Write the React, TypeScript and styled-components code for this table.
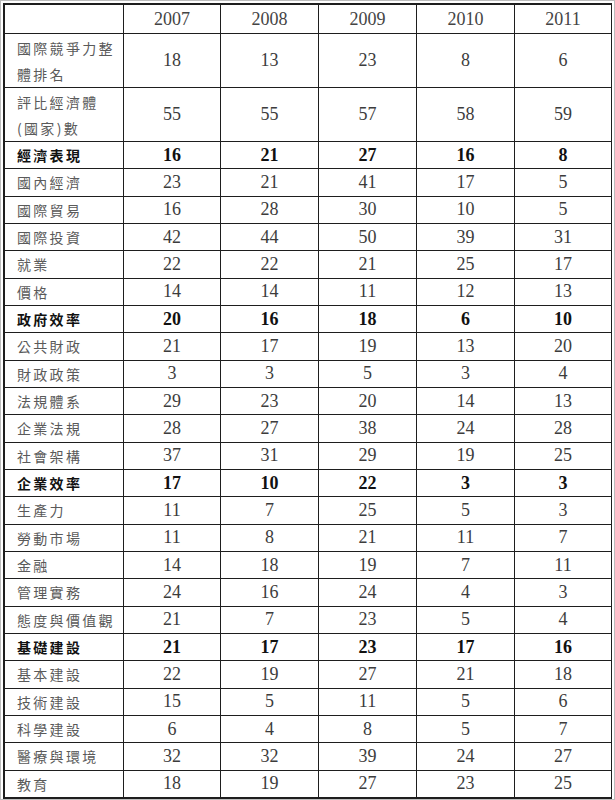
import React from 'react';
import styled, { createGlobalStyle } from 'styled-components';

const GlobalStyle = createGlobalStyle`
  html, body {
    margin: 0;
    padding: 0;
    background: #ffffff;
  }
`;

const Frame = styled.div`
  width: 615px;
  height: 800px;
  box-sizing: border-box;
  border: 1px solid #bdbdbd;
  padding: 2px;
  background: #ffffff;
`;

const TableBox = styled.div`
  width: 609px;
  box-sizing: border-box;
  border: 1px solid #1e1e1e;
`;

const Table = styled.table`
  width: 607px;
  border-collapse: collapse;
  table-layout: fixed;

  col:first-child {
    width: 119px;
  }
  col:nth-child(2),
  col:last-child {
    width: 97px;
  }
  col:nth-child(3),
  col:nth-child(4),
  col:nth-child(5) {
    width: 98px;
  }
`;

const HeadCell = styled.th`
  height: 28px;
  padding: 0;
  border: 1px solid #1e1e1e;
  font-family: "Liberation Serif", "Times New Roman", serif;
  font-size: 18px;
  font-weight: 400;
  color: #444444;
  text-align: center;
  vertical-align: middle;
`;

const LabelCell = styled.td<{ $bold?: boolean; $tall?: boolean }>`
  height: ${({ $tall }) => ($tall ? '53px' : '26.33px')};
  padding: 0 2px 0 12px;
  border: 1px solid #1e1e1e;
  font-family: "Noto Sans CJK TC", "Noto Sans", sans-serif;
  font-size: 14px;
  line-height: 26px;
  letter-spacing: 2.3px;
  white-space: pre-line;
  font-weight: ${({ $bold }) => ($bold ? 700 : 400)};
  color: ${({ $bold }) => ($bold ? '#111111' : '#5a5a5a')};
  text-align: left;
  vertical-align: middle;
`;

const NumCell = styled.td<{ $bold?: boolean }>`
  padding: 0;
  border: 1px solid #1e1e1e;
  font-family: "Liberation Serif", "Times New Roman", serif;
  font-size: 18px;
  font-weight: ${({ $bold }) => ($bold ? 700 : 400)};
  color: ${({ $bold }) => ($bold ? '#111111' : '#3c3c3c')};
  text-align: center;
  vertical-align: middle;
`;

type Row = {
  label: string;
  values: number[];
  bold?: boolean;
  tall?: boolean;
};

const years = [2007, 2008, 2009, 2010, 2011];

const rows: Row[] = [
  { label: '國際競爭力整\n體排名', values: [18, 13, 23, 8, 6], tall: true },
  { label: '評比經濟體\n(國家)數', values: [55, 55, 57, 58, 59], tall: true },
  { label: '經濟表現', values: [16, 21, 27, 16, 8], bold: true },
  { label: '國內經濟', values: [23, 21, 41, 17, 5] },
  { label: '國際貿易', values: [16, 28, 30, 10, 5] },
  { label: '國際投資', values: [42, 44, 50, 39, 31] },
  { label: '就業', values: [22, 22, 21, 25, 17] },
  { label: '價格', values: [14, 14, 11, 12, 13] },
  { label: '政府效率', values: [20, 16, 18, 6, 10], bold: true },
  { label: '公共財政', values: [21, 17, 19, 13, 20] },
  { label: '財政政策', values: [3, 3, 5, 3, 4] },
  { label: '法規體系', values: [29, 23, 20, 14, 13] },
  { label: '企業法規', values: [28, 27, 38, 24, 28] },
  { label: '社會架構', values: [37, 31, 29, 19, 25] },
  { label: '企業效率', values: [17, 10, 22, 3, 3], bold: true },
  { label: '生產力', values: [11, 7, 25, 5, 3] },
  { label: '勞動市場', values: [11, 8, 21, 11, 7] },
  { label: '金融', values: [14, 18, 19, 7, 11] },
  { label: '管理實務', values: [24, 16, 24, 4, 3] },
  { label: '態度與價值觀', values: [21, 7, 23, 5, 4] },
  { label: '基礎建設', values: [21, 17, 23, 17, 16], bold: true },
  { label: '基本建設', values: [22, 19, 27, 21, 18] },
  { label: '技術建設', values: [15, 5, 11, 5, 6] },
  { label: '科學建設', values: [6, 4, 8, 5, 7] },
  { label: '醫療與環境', values: [32, 32, 39, 24, 27] },
  { label: '教育', values: [18, 19, 27, 23, 25] },
];

export default function App() {
  return (
    <>
      <GlobalStyle />
      <Frame>
        <TableBox>
          <Table>
            <colgroup>
              <col />
              <col />
              <col />
              <col />
              <col />
              <col />
            </colgroup>
            <thead>
              <tr>
                <HeadCell />
                {years.map((y) => (
                  <HeadCell key={y}>{y}</HeadCell>
                ))}
              </tr>
            </thead>
            <tbody>
              {rows.map((r) => (
                <tr key={r.label}>
                  <LabelCell $bold={r.bold} $tall={r.tall}>{r.label}</LabelCell>
                  {r.values.map((v, i) => (
                    <NumCell key={years[i]} $bold={r.bold}>{v}</NumCell>
                  ))}
                </tr>
              ))}
            </tbody>
          </Table>
        </TableBox>
      </Frame>
    </>
  );
}
